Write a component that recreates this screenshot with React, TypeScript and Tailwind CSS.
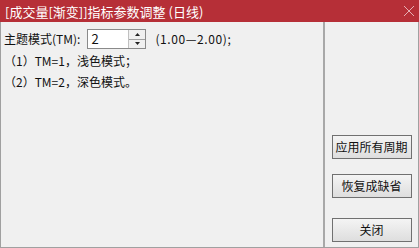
import React from 'react';

const cjk = { fontFamily: '"Noto Sans CJK SC", "Liberation Sans", sans-serif' };

const Btn: React.FC<{ label: string }> = ({ label }) => (
  <button
    className="w-[80px] h-[24px] border border-[#707070] bg-gradient-to-b from-[#f4f4f4] to-[#dedede] text-[12px] text-[#111] leading-none flex items-center justify-center"
    style={cjk}
  >
    {label}
  </button>
);

const App: React.FC = () => {
  return (
    <div className="w-[419px] h-[248px] flex flex-col bg-[#f0f0f0] overflow-hidden" style={cjk}>
      <div className="h-[22px] bg-[#b62f37] flex items-center justify-between pl-[5px] pr-[3px] text-white">
        <span className="text-[13px] leading-none">[成交量[渐变]]指标参数调整 (日线)</span>
        <svg width="14" height="14" viewBox="0 0 14 14" className="opacity-80">
          <path d="M2 2 L12 12 M12 2 L2 12" stroke="#f3d0d2" strokeWidth="1" />
        </svg>
      </div>
      <div className="flex-1 flex border-l border-r border-b border-[#a0a0a0]">
        <div className="w-[324px] border-r-2 border-[#a8a8a8] pl-[3px] pt-[7px] text-[12px] text-[#111]">
          <div className="flex items-center h-[20px]">
            <span>主题模式(TM):</span>
            <div className="ml-[7px] flex h-[20px] w-[59px] border border-[#8a8a8a] bg-white">
              <div className="flex-1 pl-[3px] text-[13px] leading-[18px]">2</div>
              <div className="w-[17px] flex flex-col bg-[#f0f0f0] border-l border-[#c0c0c0]">
                <div className="flex-1 flex items-center justify-center border-b border-[#a0a0a0]">
                  <svg width="5" height="3" viewBox="0 0 5 3"><path d="M2.5 0 L5 3 L0 3 Z" fill="#222" /></svg>
                </div>
                <div className="flex-1 flex items-center justify-center">
                  <svg width="5" height="3" viewBox="0 0 5 3"><path d="M0 0 L5 0 L2.5 3 Z" fill="#222" /></svg>
                </div>
              </div>
            </div>
            <span className="ml-[9px] tracking-[0.6px]">(1.00—2.00);</span>
          </div>
          <div className="h-[21px] flex items-center mt-[1px]">（1）TM=1，浅色模式；</div>
          <div className="h-[21px] flex items-center">（2）TM=2，深色模式。</div>
        </div>
        <div className="flex-1 flex flex-col items-center pt-[113px] gap-[15px]">
          <Btn label="应用所有周期" />
          <div className="flex flex-col gap-[20px]">
            <Btn label="恢复成缺省" />
            <Btn label="关闭" />
          </div>
        </div>
      </div>
    </div>
  );
};

export default App;
